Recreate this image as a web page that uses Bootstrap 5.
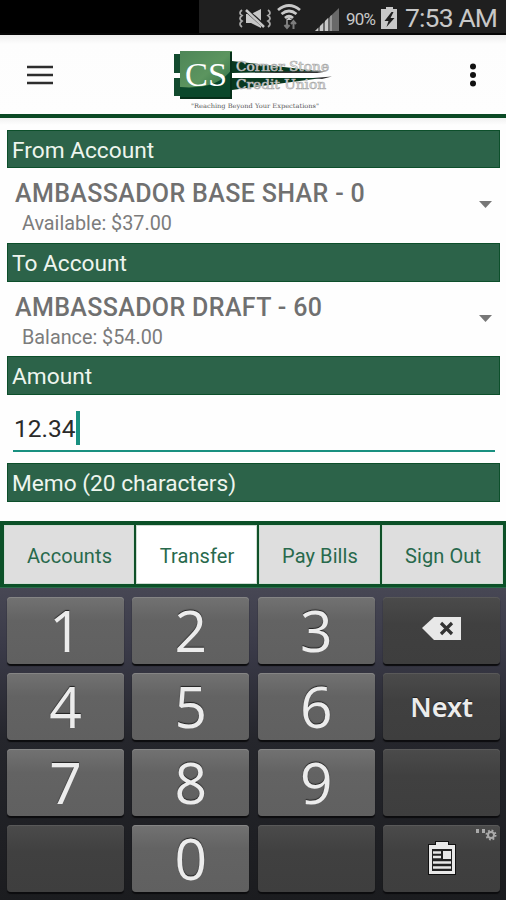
<!DOCTYPE html>
<html lang="en">
<head>
<meta charset="utf-8">
<meta name="viewport" content="width=device-width, initial-scale=1">
<title>Transfer</title>
<link href="https://cdn.jsdelivr.net/npm/bootstrap@5.3.0/dist/css/bootstrap.min.css" rel="stylesheet">
<style>
body{font-family:Roboto,"Liberation Sans",sans-serif;height:900px;overflow:hidden;background:#fff}
svg{display:block;flex:none}
.status-bar{height:35px;background:linear-gradient(90deg,#000 199px,#1f1f1f 199px);border-bottom:2px solid #060606}
.app-bar{height:83px;border-bottom:4px solid #0b4a25;background:linear-gradient(#eee,#fdfdfd 9px,#fefefe);padding:0 28px 0 27px}
.brand{margin:8px 18px 0 0}
.form-area{height:403px;padding:12px 6px 0 7px;background:linear-gradient(#f1f1f1,#fefefe 7px)}
.section-title{height:38.400px;background:#2c6349;border:1px solid #0d4f2b;border-width:1px 1px 1.500px;color:#eef5ee;font-size:22.700px;line-height:39px;padding-left:4px;white-space:nowrap}
.account-pick{height:74.800px;padding:8px 8px 0 8px;color:#737373}
.account-name{font-size:25px;line-height:35px;font-weight:500;white-space:nowrap;color:#707070;letter-spacing:.36px}
.account-sum{font-size:19.800px;line-height:26px;padding-left:7px;color:#7c7c7c}
.amount-field{height:57.500px;margin:0 5px 11px 6px;padding:14px 0 0 1px;border-bottom:2px solid #199080;font-size:24.500px;color:#2a2a2a}
.caret-bar{width:4px;height:34px;background:#199080;margin-bottom:3px}
.tab-row{height:66px;background:#0f5128;border:solid #0c5128;border-width:4px 3px 3px 4px;display:grid;grid-template-columns:130px 121px 121px 121px;gap:2px}
.tab-item{background:#dedede;color:#28694c;font-size:20px;border:1px solid #cfdcd3;letter-spacing:.1px;padding:3px 0 0 1px}
.tab-item.on{background:#fff}
.keypad{height:313px;background:linear-gradient(#474754,#3a3a48 60px,#25262c 150px,#1b1c1f);border-top:1px solid #2c6b4c;padding:9px 6px 0 7px;display:grid;grid-template-columns:repeat(4,117px);grid-template-rows:repeat(4,67px);gap:9px 8.400px}
.key{border-radius:4px;border:0;background:linear-gradient(#727272,#636363 35%,#606060);color:#ececec;font:400 57px/1 "Open Sans","Noto Sans",sans-serif;box-shadow:0 2px 1px #0c0c0e,inset 0 1px #858585;text-shadow:0 -1px 1px #222}
.key.dim{background:linear-gradient(#4b4b4b,#404040 40%,#3e3e3e);box-shadow:0 2px 1px #0c0c0e,inset 0 1px #595959}
.key.key-word{font:600 27px/1 "Noto Sans","Open Sans",sans-serif}
.key-hint{top:3px;right:2px}
</style>
<script src="https://cdn.jsdelivr.net/npm/bootstrap@5.3.0/dist/js/bootstrap.bundle.min.js"></script>
</head>
<body>
<div class="status-bar d-flex justify-content-end">
<svg width="270" height="33" viewBox="236 0 270 33" font-family="Roboto,sans-serif" fill="#c8c8c8">
<path d="M246 14h5l10-5v19l-10-5h-5z"/>
<path d="M245 9l19 17" stroke="#1f1f1f" stroke-width="4"/><path d="M246 10l18 17" stroke="#c8c8c8" stroke-width="2.500"/>
<path d="M242 10q-4 3 0 5.500q-4 3 0 5.500q-4 3 0 6M268 10q4 3 0 5.500q4 3 0 5.500q4 3 0 6" fill="none" stroke="#aaa" stroke-width="1.800"/>
<path d="M278 10q11-9 22 0M281.500 14q7.500-6 15 0M285 18q4-3.500 8 0" fill="none" stroke="#c8c8c8" stroke-width="2.800"/>
<path d="M289 17l3 3h-6z"/><path d="M287 20v8m-2.500-3l2.500 3 2.500-3M293.500 29v-8m-2.500 3l2.500-3 2.500 3" fill="none" stroke="#7d7d7d" stroke-width="2"/>
<path d="M315 31L339 8v23z" fill="#696969"/><path d="M315 31l3-3v3zM320 26l3-3v8h-3zM325 21l3-3v13h-3z"/><path d="M330.500 16l1-1v16h-1z"/>
<text x="346" y="25" font-size="17" textLength="30">90%</text>
<path d="M386 7h7v2h4v20h-16V9h5z"/><path d="M391.500 12l-7 9h4l-2 6 8-9h-4l3-6z" fill="#1f1f1f"/>
<text x="405" y="27" font-size="26.500" textLength="93">7:53 AM</text>
</svg>
</div>
<header class="app-bar d-flex align-items-center justify-content-between">
<svg width="27" height="20" stroke="#2e2e2e" stroke-width="2.300"><path d="M0 2h26M0 10h26M0 18h26"/></svg>
<svg class="brand" width="164" height="64" viewBox="170 47 164 64">
<defs><linearGradient id="lg" x1="0" y1="0" x2="1" y2="1"><stop offset="0" stop-color="#4e8658"/><stop offset=".5" stop-color="#5c955f"/><stop offset="1" stop-color="#23653e"/></linearGradient></defs>
<path d="M174 54h6v19h-6zM174 78h6v18h-6z" fill="#124a2e"/>
<path d="M232 61l90 10.500-90 1.500zM232 78h90l-90 12z" fill="#08381f"/>
<path d="M232 73h99l-20 5h-79z" fill="#fff"/><path d="M290 71.500h37l-10 1.500h-70zM322 79l10-2.500-19 1.500z" fill="#333"/>
<path d="M180 51h52v46h-52z" fill="url(#lg)"/><path d="M180 87q38 3 52-18v28h-52z" fill="#0a482b"/>
<path d="M180 97h52v2h-52zM230 52h2v47h-2z" fill="#06301a"/>
<g font-family="'Liberation Serif',serif"><text x="185" y="86" font-size="34" fill="#fff" textLength="42" lengthAdjust="spacingAndGlyphs">CS</text></g>
<g font-family="'DejaVu Serif',serif" font-size="12" fill="#f1f1f1" stroke="#aaa" stroke-width=".6"><text x="236" y="71" textLength="93" lengthAdjust="spacingAndGlyphs">Corner Stone</text><text x="236" y="89" textLength="90" lengthAdjust="spacingAndGlyphs">Credit Union</text></g>
<text x="191" y="108" font-family="'DejaVu Serif',serif" font-size="6.200" fill="#555" textLength="128" lengthAdjust="spacingAndGlyphs">"Reaching Beyond Your Expectations"</text>
</svg>
<svg width="10" height="26" fill="#111"><circle cx="5" cy="4.500" r="3"/><circle cx="5" cy="13" r="3"/><circle cx="5" cy="21.500" r="3"/></svg>
</header>
<main class="form-area">
<div class="section-title">From Account</div>
<div class="account-pick d-flex justify-content-between">
<div><div class="account-name">AMBASSADOR BASE SHAR - 0</div><div class="account-sum">Available: $37.00</div></div>
<svg class="mt-4" width="13" height="15" fill="#777"><path d="M0 1h13L6.500 8z"/></svg>
</div>
<div class="section-title">To Account</div>
<div class="account-pick d-flex justify-content-between">
<div><div class="account-name">AMBASSADOR DRAFT - 60</div><div class="account-sum">Balance: $54.00</div></div>
<svg class="mt-4" width="13" height="15" fill="#777"><path d="M0 1h13L6.500 8z"/></svg>
</div>
<div class="section-title">Amount</div>
<div class="amount-field d-flex align-items-center"><span class="amount-value">12.34</span><span class="caret-bar"></span></div>
<div class="section-title">Memo (20 characters)</div>
</main>
<nav class="tab-row">
<div class="tab-item d-flex align-items-center justify-content-center">Accounts</div>
<div class="tab-item on d-flex align-items-center justify-content-center">Transfer</div>
<div class="tab-item d-flex align-items-center justify-content-center">Pay Bills</div>
<div class="tab-item d-flex align-items-center justify-content-center">Sign Out</div>
</nav>
<section class="keypad">
<button class="key p-0">1</button><button class="key p-0">2</button><button class="key p-0">3</button>
<button class="key dim p-0 d-flex align-items-center justify-content-center" aria-label="Delete"><svg class="mb-1" width="42" height="26"><path d="M1 12L13 1h27v23H13z" fill="#e8e8e8"/><path d="M20 7l11 11M31 7L20 18" stroke="#333" stroke-width="3.200"/></svg></button>
<button class="key p-0">4</button><button class="key p-0">5</button><button class="key p-0">6</button>
<button class="key dim key-word p-0">Next</button>
<button class="key p-0">7</button><button class="key p-0">8</button><button class="key p-0">9</button><button class="key dim" aria-label="Blank"></button>
<button class="key dim" aria-label="Blank"></button><button class="key p-0">0</button><button class="key dim" aria-label="Blank"></button>
<button class="key dim p-0 position-relative d-flex align-items-center justify-content-center" aria-label="Clipboard">
<svg width="30" height="35"><path d="M1 3h7V0h14v3h7v31H1z" fill="#111"/><path d="M2 4h7V1h12v3h7v29H2z" fill="#e8e8e8"/><path d="M5 8h20v22H5z" fill="#222"/><path d="M6 11.500h8M6 16h8M6 21.500h18M6 26.500h18" stroke="#e8e8e8" stroke-width="2.600"/><path d="M16 10h8v8h-8z" fill="#e8e8e8"/></svg>
<svg class="key-hint position-absolute" width="24" height="14"><path d="M2 1h3v4H2zM8 1h3v4H8z" fill="#aaa"/><circle cx="17" cy="7" r="4.500" fill="none" stroke="#aaa" stroke-width="2" stroke-dasharray="1.800 1.730"/><circle cx="17" cy="7" r="3" fill="none" stroke="#aaa" stroke-width="2"/></svg>
</button>
</section>
</body>
</html>
